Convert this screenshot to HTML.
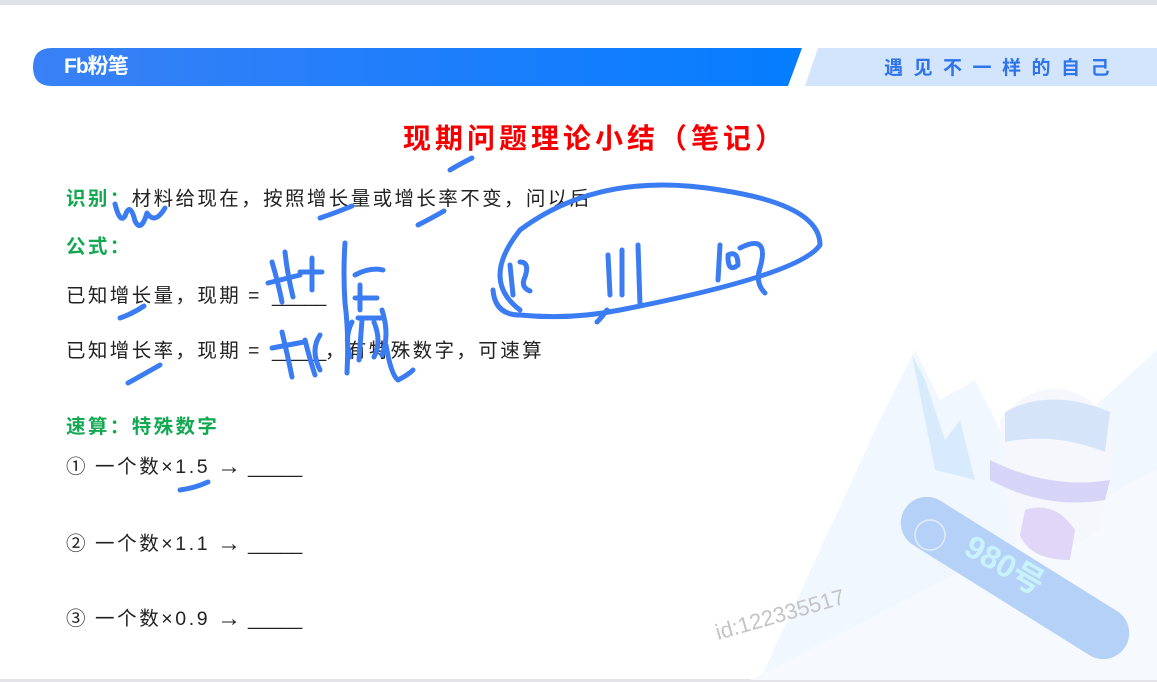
<!DOCTYPE html>
<html><head><meta charset="utf-8"><style>
*{margin:0;padding:0;box-sizing:border-box}
body{width:1157px;height:682px;overflow:hidden;background:#fff;position:relative;font-family:"Liberation Sans","Noto Sans CJK SC",sans-serif;color:#222}
.t{position:absolute;font-size:19.5px;white-space:nowrap;line-height:1;letter-spacing:2.4px}
.g{color:#11a851;font-weight:bold}
.s{position:absolute;font-size:19.5px;white-space:nowrap;line-height:1}
</style></head><body>
<div style="position:absolute;left:0;top:0;width:1157px;height:5px;background:#e1e2e7"></div>
<div style="position:absolute;left:0;bottom:0;width:1157px;height:3px;background:#e4e4e8"></div>
<svg style="position:absolute;left:0;top:0" width="1157" height="682">
<defs><linearGradient id="hb" x1="0" x2="1"><stop offset="0" stop-color="#3a80f6"/><stop offset="1" stop-color="#047dff"/></linearGradient></defs>
<polygon points="760,680 880,420 915,350 940,400 975,380 1020,470 1080,420 1157,350 1157,680" fill="#f1f7fe"/>
<polygon points="912,355 925,380 945,440 960,420 975,480 935,470" fill="#d8ebfc"/>
<polygon points="750,680 1157,470 1157,680" fill="#f6fafe"/>
<path d="M1000,420 q40,-50 90,-20 q30,30 20,70 l-10,60 q-40,30 -90,10 z" fill="#f5f7fd"/>
<path d="M1005,412 q45,-25 105,0 l-5,40 q-50,-20 -100,-10 z" fill="#d6e4fa"/>
<path d="M990,460 q60,30 120,20 l-5,20 q-60,10 -115,-20 z" fill="#d6d5f7"/>
<path d="M1025,510 q30,-10 50,20 l-5,30 q-40,0 -50,-25 z" fill="#e0d6f8"/>
<rect x="885" y="552" width="260" height="52" rx="26" transform="rotate(32 1015 578)" fill="#b6d1f7"/>
<circle cx="930" cy="535" r="15" fill="none" stroke="#e0edfc" stroke-width="1.5"/>
<text x="955" y="570" transform="rotate(30 990 575)" font-family="Liberation Sans,Noto Sans CJK SC,sans-serif" font-weight="bold" font-size="32" fill="#c8f3fb">980号</text>
<text x="718" y="640" transform="rotate(-16 718 640)" font-family="Liberation Sans,sans-serif" font-size="22" fill="#c4c4c4">id:122335517</text>
<path d="M52,48 L802,48 L788,86 L52,86 Q33,86 33,67 Q33,48 52,48 Z" fill="url(#hb)"/>
<polygon points="818,48 1157,48 1157,86 805,86" fill="#d2e5fc"/>
</svg>
<div style="position:absolute;left:64px;top:55px;color:#fff;font-weight:bold;font-size:21px;line-height:24px;letter-spacing:-1px">Fb粉笔</div>
<div style="position:absolute;left:884px;top:57px;color:#2f74ea;font-weight:bold;font-size:19px;letter-spacing:10.5px;line-height:24px">遇见不一样的自己</div>
<div class="t" style="left:403px;top:125px;color:#f40000;font-weight:bold;font-size:28px;letter-spacing:4px">现期问题理论小结（笔记）</div>
<div class="t" style="left:66px;top:190px"><span class="g">识别：</span>材料给现在，按照增长量或增长率不变，问以后</div>
<div class="t g" style="left:66px;top:238px">公式：</div>
<div class="t" style="left:66px;top:287px">已知增长量，现期</div>
<div class="s" style="left:248px;top:287px">=</div><div class="s" style="left:272px;top:287px">_____</div>
<div class="t" style="left:66px;top:342px">已知增长率，现期</div>
<div class="s" style="left:248px;top:342px">=</div><div class="s" style="left:272px;top:342px">_____</div>
<div class="t" style="left:325px;top:342px">，有特殊数字，可速算</div>
<div class="t g" style="left:66px;top:418px">速算：特殊数字</div>
<div class="s" style="left:66px;top:458px">①</div><div class="t" style="left:95px;top:458px;letter-spacing:2.6px">一个数×1.5</div><div class="s" style="left:217px;top:455px;font-weight:bold;font-size:24px">→</div><div class="s" style="left:248px;top:458px">_____</div>
<div class="s" style="left:66px;top:535px">②</div><div class="t" style="left:95px;top:535px;letter-spacing:2.6px">一个数×1.1</div><div class="s" style="left:217px;top:532px;font-weight:bold;font-size:24px">→</div><div class="s" style="left:248px;top:535px">_____</div>
<div class="s" style="left:66px;top:610px">③</div><div class="t" style="left:95px;top:610px;letter-spacing:2.6px">一个数×0.9</div><div class="s" style="left:217px;top:607px;font-weight:bold;font-size:24px">→</div><div class="s" style="left:248px;top:610px">_____</div>
<svg style="position:absolute;left:0;top:0" width="1157" height="682" fill="none" stroke="#3b7cf3" stroke-width="5" stroke-linecap="round" stroke-linejoin="round">
<path d="M450,170 q10,-6 22,-12"/>
<path d="M115,204 q5,20 10,12 q5,-15 10,5 q6,12 12,-8 q8,12 18,-5"/>
<path d="M320,218 q15,-5 32,-12"/>
<path d="M418,225 q12,-6 26,-14"/>
<path d="M120,318 q12,-4 24,-12"/>
<path d="M128,383 q18,-10 32,-18"/>
<path d="M180,490 q15,-2 28,-8"/>
<path d="M272,262 q6,20 10,40 M285,252 q2,20 8,45 M268,283 l32,-8 M312,258 l0,32 M300,272 l22,0"/>
<path d="M345,243 q-2,30 0,60 q4,30 2,70 M355,275 q15,-8 28,-5 M360,285 l0,25 M355,298 l22,0 M358,318 l24,0"/>
<path d="M282,332 q6,25 10,45 M272,348 l32,-6 M305,340 q5,20 10,35 M320,335 q-10,15 0,35"/>
<path d="M352,322 q-8,15 -2,35 M362,320 l-3,40 M374,322 q8,20 0,35 M382,310 q8,25 0,45 M386,345 q5,30 12,35 q10,-5 15,-10"/>
<path d="M520,310 q-40,-30 0,-80 q80,-60 200,-40 q100,15 100,55 q-20,30 -200,65 q-50,10 -100,5 Q495,315 493,290"/>
<path d="M597,322 q5,-5 10,-12"/>
<path d="M510,265 l3,30 M520,262 q10,0 5,15 q-5,10 5,14"/>
<path d="M608,255 l2,40 M622,250 l0,45 M638,245 l2,60"/>
<path d="M720,245 l-2,35 M728,255 q10,-5 10,10 q-10,8 -10,-8 M740,248 q30,-15 20,20 q-5,15 5,25"/>
</svg>
</body></html>
